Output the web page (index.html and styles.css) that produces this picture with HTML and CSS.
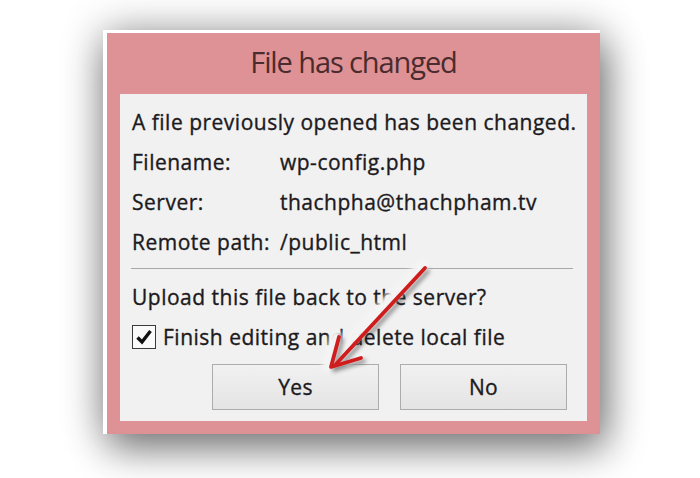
FILE: index.html
```html
<!DOCTYPE html>
<html lang="en">
<head>
  <meta charset="UTF-8">
  <title>File has changed</title>
  <link rel="stylesheet" href="styles.css">
</head>
<body>
  <div class="dialog">
    <h1 class="title">File has changed</h1>
    <div class="panel">
      <p class="row">A file previously opened has been changed.</p>
      <p class="row"><span class="label">Filename:</span>wp-config.php</p>
      <p class="row"><span class="label">Server:</span>thachpha@thachpham.tv</p>
      <p class="row"><span class="label">Remote path:</span>/public_html</p>
      <hr class="sep">
      <p class="row">Upload this file back to the server?</p>
      <label class="row check">
        <span class="box">
          <svg width="18" height="18" viewBox="0 0 18 18"><path d="M2.5 9.5 L7 14 L15.5 3" fill="none" stroke="#111" stroke-width="3.4"/></svg>
        </span>
        Finish editing and delete local file
      </label>
      <div class="buttons">
        <button class="btn">Yes</button>
        <button class="btn">No</button>
      </div>
    </div>
  </div>

  <!-- red annotation arrow drawn over the screenshot -->
  <svg class="arrow" width="700" height="478" viewBox="0 0 700 478">
    <defs>
      <filter id="glow" x="-20%" y="-20%" width="140%" height="140%">
        <feGaussianBlur stdDeviation="2"/>
      </filter>
      <filter id="shade" x="-20%" y="-20%" width="140%" height="140%">
        <feDropShadow dx="3" dy="3" stdDeviation="2" flood-color="#000" flood-opacity="0.45"/>
      </filter>
    </defs>
    <g fill="none" stroke-linecap="round" stroke-linejoin="round">
      <g stroke="#f4f4f4" stroke-width="12" filter="url(#glow)" transform="translate(-3 -1)">
        <path d="M426 266 L345 350"/>
        <path d="M339 337 L331 367 L361 358"/>
      </g>
      <g stroke="#cf1d1f" stroke-width="3.8" filter="url(#shade)">
        <path d="M425 268 L336 364"/>
        <path d="M339 337 L331 367 L361 358"/>
      </g>
    </g>
  </svg>
</body>
</html>
```

FILE: styles.css
```css
body { margin: 0; width: 700px; height: 478px; background: #fff; padding: 30px 0 0 103px; box-sizing: border-box; font-family: "Open Sans", "Noto Sans", sans-serif; color: #1c1a1d; overflow: hidden; position: relative; }
.dialog { width: 467px; background: #df9295; border-top: 3px solid #fff; border-left: 4px solid #fff; padding: 0 13px 13px 13px; box-shadow: 0 0 40px rgba(0,0,0,0.3), 6px 16px 36px rgba(0,0,0,0.42); }
.title { margin: 0; height: 61px; line-height: 58px; text-align: center; font-size: 29px; font-weight: 400; letter-spacing: -1.1px; color: #4a2c2e; }
.panel { background: #f1f1f1; padding: 8px 14px 11px 12px; }
.row { margin: 0; height: 40px; line-height: 40px; font-size: 21px; letter-spacing: 0.5px; white-space: nowrap; -webkit-text-stroke: 0.35px #1c1a1d; }
.label { display: inline-block; width: 148px; }
.sep { margin: 6px 0 8px -1px; border: 0; border-top: 1px solid #a9a9a9; }
.check { display: flex; align-items: center; gap: 7px; }
.box { width: 22px; height: 22px; border: 1px solid #3a3a3a; background: #fafafa; display: flex; align-items: center; justify-content: center; }
.buttons { display: flex; justify-content: flex-end; gap: 21px; margin-top: 7px; padding-right: 6px; }
.btn { width: 167px; height: 46px; border: 1px solid #acacac; background: linear-gradient(#f1f1f1, #e4e4e4); font-family: inherit; font-size: 21px; letter-spacing: 0.3px; color: #1c1a1d; -webkit-text-stroke: 0.35px #1c1a1d; }
.arrow { position: absolute; left: 0; top: 0; pointer-events: none; }
```
